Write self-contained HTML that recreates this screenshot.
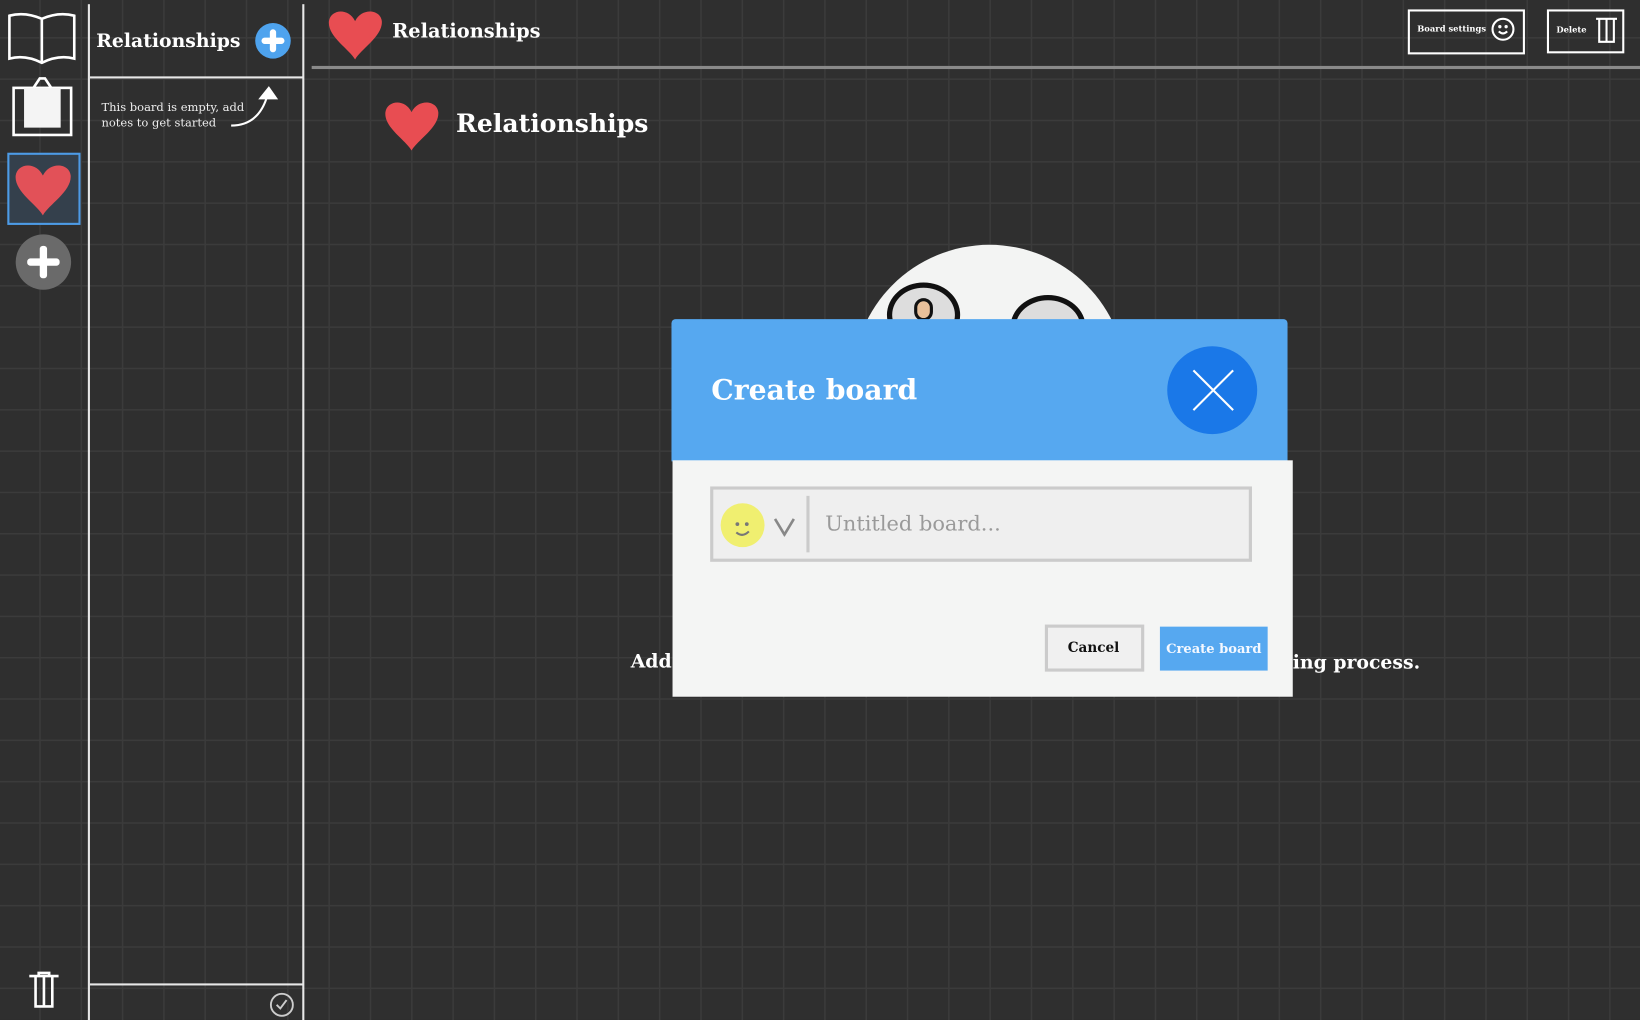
<!DOCTYPE html>
<html><head><meta charset="utf-8"><style>
html,body{margin:0;padding:0;width:1640px;height:1020px;overflow:hidden;background:#2f2f2f}
#w{position:absolute;left:0;top:0;width:1568px;height:975px;transform:scale(1.04592,1.04615);transform-origin:0 0;
background-color:#2f2f2f;
background-image:linear-gradient(90deg,#3b3b3b 1.5px,transparent 1.5px),linear-gradient(#3b3b3b 1.5px,transparent 1.5px);
background-size:39.5px 39.5px;background-position:-2px -4px;
font-family:"DejaVu Serif","Liberation Serif",serif;color:#fff}
.a{position:absolute}
.b{font-weight:bold}
</style></head><body><div id="w">
<div class="a" style="left:84px;top:4px;width:2px;height:971px;background:#e8e8e8"></div>
<div class="a" style="left:289px;top:4px;width:2px;height:971px;background:#e8e8e8"></div>
<div class="a" style="left:86px;top:73px;width:204px;height:2px;background:#e8e8e8"></div>
<div class="a" style="left:86px;top:940px;width:204px;height:2px;background:#e8e8e8"></div>
<div class="a" style="left:298px;top:63px;width:1270px;height:3px;background:#8a8a8a"></div>
<svg class="a" style="left:6px;top:10px" width="68" height="52" viewBox="0 0 68 52" fill="none" stroke="#fff" stroke-width="2.5"><path d="M3 5 Q18 1 34 8 Q50 1 65 5 V46 Q50 42 34 50 Q18 42 3 46Z M34 8 V50"/></svg>
<svg class="a" style="left:10px;top:70px" width="62" height="62" viewBox="0 0 62 62"><rect x="3" y="14" width="55" height="45" fill="none" stroke="#fff" stroke-width="2.5"/><rect x="13" y="14" width="35" height="38" fill="#f4f4f4"/><path d="M22 14 L28 5 H33 L39 14" fill="none" stroke="#fff" stroke-width="2.5"/></svg>
<div class="a" style="left:7px;top:146px;width:66px;height:65px;border:2px solid #4d9be6;background:#34404c"></div>
<svg class="a" style="left:12px;top:155px" width="58" height="52" viewBox="0 0 100 90"><path d="M50 88 C40 70 2 48 5 22 C8 2 38 -2 50 22 C62 -2 94 2 96 22 C98 48 60 70 50 88Z" fill="#e25158"/></svg>
<div class="a" style="left:15px;top:224px;width:53px;height:53px;border-radius:50%;background:#6a6a6a"></div>
<div class="a" style="left:26px;top:247px;width:31px;height:7px;border-radius:3px;background:#fff"></div>
<div class="a" style="left:38px;top:235px;width:7px;height:31px;border-radius:3px;background:#fff"></div>
<svg class="a" style="left:26px;top:928px" width="32" height="36" viewBox="0 0 32 36" fill="none" stroke="#fff" stroke-width="2.5"><path d="M2 5 H30 M8 5 V34 H24 V5 M16 5 V34 M11 5 V2 H21 V5"/></svg>
<div class="a b" style="left:92px;top:29px;font-size:18px">Relationships</div>
<div class="a" style="left:244px;top:22px;width:34px;height:34px;border-radius:50%;background:#4ea3ee"></div>
<div class="a" style="left:250px;top:36px;width:22px;height:6px;border-radius:3px;background:#fff"></div>
<div class="a" style="left:258px;top:28px;width:6px;height:22px;border-radius:3px;background:#fff"></div>
<div class="a" style="left:97px;top:95px;font-size:11px;line-height:15px;color:#eee">This board is empty, add<br>notes to get started</div>
<svg class="a" style="left:218px;top:82px" width="50" height="42" viewBox="0 0 50 42" fill="none" stroke="#fff" stroke-width="2"><path d="M3 38 Q30 38 38 8"/><path d="M31 12 L39 2 L46 12Z" fill="#fff"/></svg>
<svg class="a" style="left:257px;top:948px" width="25" height="25" viewBox="0 0 25 25" fill="none" stroke="#ccc" stroke-width="1.8"><circle cx="12.5" cy="12.5" r="10.5"/><path d="M7.5 12.5 L11 16 L17 8"/></svg>
<svg class="a" style="left:311px;top:8px" width="57" height="50" viewBox="0 0 100 90"><path d="M50 88 C40 70 2 48 5 22 C8 2 38 -2 50 22 C62 -2 94 2 96 22 C98 48 60 70 50 88Z" fill="#e84d52"/></svg>
<div class="a b" style="left:375px;top:20px;font-size:18.5px">Relationships</div>
<div class="a" style="left:1346px;top:9px;width:108px;height:39px;border:2px solid #fff"></div>
<div class="a b" style="left:1355px;top:22px;font-size:8px">Board settings</div>
<svg class="a" style="left:1425px;top:16px" width="24" height="24" viewBox="0 0 24 24" fill="none" stroke="#fff" stroke-width="2"><circle cx="12" cy="12" r="10"/><circle cx="9" cy="9.5" r=".6" fill="#fff"/><circle cx="15" cy="9.5" r=".6" fill="#fff"/><path d="M8 14 Q12 18 16 14"/></svg>
<div class="a" style="left:1479px;top:9px;width:70px;height:38px;border:2px solid #fff"></div>
<div class="a b" style="left:1488px;top:23px;font-size:8px">Delete</div>
<svg class="a" style="left:1524px;top:14px" width="24" height="28" viewBox="0 0 24 28" fill="none" stroke="#fff" stroke-width="2"><path d="M2 4 H22 M5 4 V26 H19 V4 M12 4 V26"/></svg>
<svg class="a" style="left:364px;top:95px" width="59" height="50" viewBox="0 0 100 90"><path d="M50 88 C40 70 2 48 5 22 C8 2 38 -2 50 22 C62 -2 94 2 96 22 C98 48 60 70 50 88Z" fill="#e84d52"/></svg>
<div class="a b" style="left:436px;top:103px;font-size:24px">Relationships</div>
<div class="a b" style="left:603px;top:622px;font-size:18px">Add</div>
<div class="a b" style="left:1236px;top:623px;font-size:18px">ing process.</div>
<div class="a" style="left:815px;top:234px;width:262px;height:262px;border-radius:50%;background:#f3f4f3"></div>
<div class="a" style="left:848px;top:270px;width:70px;height:62px;border-radius:50%;border:5px solid #111;background:#ddd;box-sizing:border-box"></div>
<div class="a" style="left:874px;top:285px;width:18px;height:22px;border-radius:9px;border:3px solid #111;background:#e8c09a;box-sizing:border-box"></div>
<div class="a" style="left:966px;top:282px;width:72px;height:62px;border-radius:50%;border:5px solid #111;background:#ddd;box-sizing:border-box"></div>
<div class="a" style="left:642px;top:305px;width:589px;height:136px;background:#56a8f0;border-radius:4px 4px 0 0"></div>
<div class="a b" style="left:680px;top:358px;font-size:27px">Create board</div>
<div class="a" style="left:1116px;top:331px;width:86px;height:84px;border-radius:50%;background:#1a78e8"></div>
<svg class="a" style="left:1138px;top:351px" width="44" height="44" viewBox="0 0 44 44" stroke="#fff" stroke-width="2"><path d="M3 3 L41 41 M41 3 L3 41"/></svg>
<div class="a" style="left:643px;top:440px;width:593px;height:226px;background:#f4f5f4"></div>
<div class="a" style="left:679px;top:465px;width:512px;height:66px;border:3px solid #cbcbcb;background:#efefef"></div>
<div class="a" style="left:689px;top:481px;width:42px;height:42px;border-radius:50%;background:#f0ef70"></div>
<svg class="a" style="left:689px;top:481px" width="42" height="42" viewBox="0 0 42 42" fill="none" stroke="#777" stroke-width="2"><circle cx="16" cy="20" r=".8" fill="#777"/><circle cx="25" cy="20" r=".8" fill="#777"/><path d="M15 28 Q21 33 27 27"/></svg>
<svg class="a" style="left:739px;top:493px" width="22" height="20" viewBox="0 0 22 20" fill="none" stroke="#888" stroke-width="2.5"><path d="M2 3 L11 18 L20 3"/></svg>
<div class="a" style="left:771px;top:474px;width:3px;height:54px;background:#cbcbcb"></div>
<div class="a" style="left:789px;top:488px;font-size:20px;color:#9a9a9a">Untitled board...</div>
<div class="a" style="left:999px;top:597px;width:89px;height:39px;border:3px solid #cbcbcb;background:#f0f0f0"></div>
<div class="a b" style="left:998px;top:612px;width:95px;text-align:center;font-size:13px;color:#111">Cancel</div>
<div class="a" style="left:1109px;top:599px;width:103px;height:42px;background:#56a8f0"></div>
<div class="a b" style="left:1109px;top:612px;width:103px;text-align:center;font-size:12.5px;color:#f4f8ff">Create board</div>
</div></body></html>
